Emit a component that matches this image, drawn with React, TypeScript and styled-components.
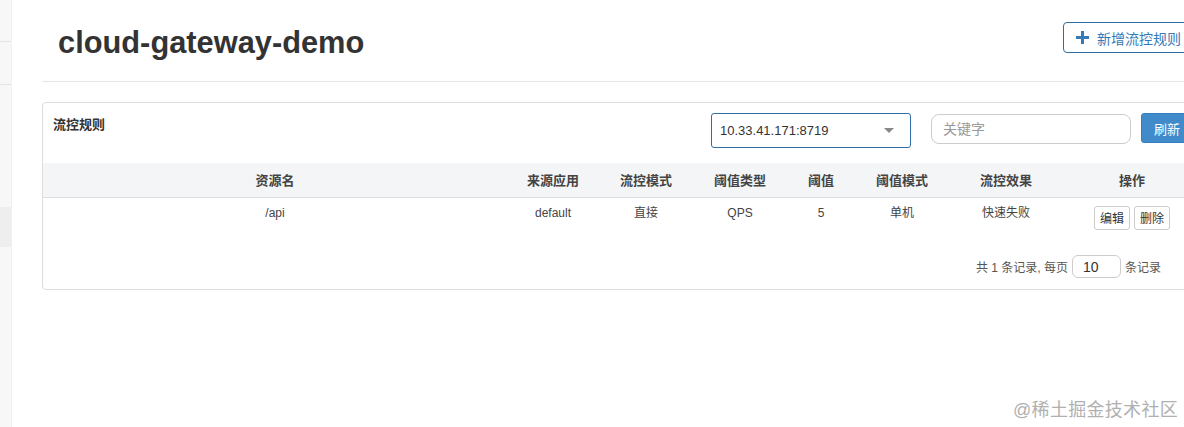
import React from 'react';
import styled, { createGlobalStyle } from 'styled-components';

const GlobalStyle = createGlobalStyle`
  html, body { margin: 0; padding: 0; background: #fff; }
  body {
    font-family: "Liberation Sans", "Noto Sans CJK SC", sans-serif;
    color: #333;
    overflow: hidden;
  }
  * { box-sizing: border-box; }
`;

const Shell = styled.div`
  position: relative;
  display: flex;
  width: 1184px;
  height: 427px;
  overflow: hidden;
`;

const Sidebar = styled.nav`
  flex: 0 0 12px;
  display: flex;
  flex-direction: column;
  background: #f7f7f7;
  border-right: 1px solid #f0f0f0;
`;

const NavItem = styled.div<{ $h: number; $active?: boolean; $line?: boolean }>`
  height: ${({ $h }) => $h}px;
  flex: 0 0 auto;
  background: ${({ $active }) => ($active ? '#eeeeee' : 'transparent')};
  border-bottom: ${({ $line }) => ($line ? '1px solid #e4e4e4' : 'none')};
`;

const Main = styled.main`
  flex: 0 0 auto;
  width: 1200px;
  padding: 0 0 0 30px;
`;

const Content = styled.div`
  width: 1160px;
`;

const Header = styled.header`
  display: flex;
  justify-content: space-between;
  align-items: flex-start;
  height: 82px;
  border-bottom: 1px solid #e5e5e5;
`;

const Title = styled.h1`
  margin: 26px 0 0 16px;
  font-size: 30.8px;
  line-height: 34px;
  font-weight: bold;
  color: #333;
`;

const OutlineButton = styled.button`
  margin: 22px 8px 0 0;
  height: 31px;
  padding: 0 12px;
  display: flex;
  align-items: center;
  gap: 8px;
  border: 1px solid #2e6da4;
  border-radius: 4px;
  background: #fff;
  color: #337ab7;
  font-family: inherit;
  font-size: 14px;
`;

const Panel = styled.section`
  margin-top: 20px;
  border: 1px solid #dddddd;
  border-radius: 4px;
  overflow: hidden;
`;

const Toolbar = styled.div`
  display: flex;
  align-items: flex-start;
  padding: 10px 8px 15px 10px;
`;

const PanelTitle = styled.div`
  flex: 1;
  padding-top: 1px;
  font-size: 13px;
  font-weight: bold;
  color: #333;
`;

const SelectBox = styled.div`
  width: 200px;
  height: 35px;
  display: flex;
  align-items: center;
  justify-content: space-between;
  padding: 0 16px 0 8px;
  border: 1px solid #2f6fa8;
  border-radius: 3px;
  font-size: 13px;
  color: #333;
`;

const SearchInput = styled.input`
  margin-left: 20px;
  margin-top: 1px;
  width: 200px;
  height: 30px;
  padding: 0 11px;
  border: 1px solid #cccccc;
  border-radius: 8px;
  font-family: inherit;
  font-size: 14px;
  color: #333;
  outline: none;
  &::placeholder { color: #999; }
`;

const PrimaryButton = styled.button`
  margin-left: 10px;
  height: 30px;
  padding: 0 12px;
  border: 1px solid #357ebd;
  border-radius: 3px;
  background: #428bca;
  color: #fff;
  font-family: inherit;
  font-size: 13px;
`;

const Table = styled.table`
  width: 100%;
  border-collapse: collapse;
  table-layout: fixed;
`;

const Th = styled.th<{ $w: number }>`
  width: ${({ $w }) => $w}px;
  height: 34px;
  background: #f4f5f6;
  border-bottom: 1px solid #dddddd;
  font-size: 13px;
  font-weight: bold;
  color: #444;
  text-align: center;
  padding: 0;
`;

const Td = styled.td`
  height: 40px;
  vertical-align: top;
  padding: 6px 0 0;
  line-height: 18px;
  font-size: 12px;
  color: #444;
  text-align: center;
`;

const ActionCell = styled(Td)`
  padding-top: 8px;
`;

const SmallButton = styled.button`
  height: 24px;
  padding: 0 5px;
  margin: 0 2px;
  border: 1px solid #cccccc;
  border-radius: 3px;
  background: #fff;
  color: #333;
  font-family: inherit;
  font-size: 12px;
`;

const Pager = styled.div`
  display: flex;
  justify-content: flex-end;
  align-items: center;
  gap: 4px;
  padding: 18px 40px 11px 0;
  font-size: 12px;
  color: #555;
`;

const PageSize = styled.input`
  width: 49px;
  height: 23px;
  padding: 0 10px;
  border: 1px solid #cccccc;
  border-radius: 6px;
  font-family: inherit;
  font-size: 14px;
  color: #333;
  outline: none;
`;

const Watermark = styled.div`
  position: absolute;
  right: 6px;
  bottom: 6px;
  font-size: 18px;
  color: #b0b0b0;
  letter-spacing: 0.3px;
`;

const columns = [
  { label: '资源名', w: 464 },
  { label: '来源应用', w: 92 },
  { label: '流控模式', w: 94 },
  { label: '阈值类型', w: 94 },
  { label: '阈值', w: 68 },
  { label: '阈值模式', w: 94 },
  { label: '流控效果', w: 114 },
  { label: '操作', w: 138 },
];

const rules = [
  { resource: '/api', app: 'default', mode: '直接', grade: 'QPS', count: '5', cluster: '单机', effect: '快速失败' },
];

export default function App() {
  return (
    <Shell>
      <GlobalStyle />
      <Sidebar>
        <NavItem $h={42} $line />
        <NavItem $h={43} $line />
        <NavItem $h={122} />
        <NavItem $h={40} $active />
      </Sidebar>
      <Main>
        <Content>
          <Header>
            <Title>cloud-gateway-demo</Title>
            <OutlineButton type="button">
              <svg width="13" height="13" viewBox="0 0 13 13">
                <path d="M5 0h3v5h5v3H8v5H5V8H0V5h5z" fill="#337ab7" />
              </svg>
              新增流控规则
            </OutlineButton>
          </Header>
          <Panel>
            <Toolbar>
              <PanelTitle>流控规则</PanelTitle>
              <SelectBox>
                <span>10.33.41.171:8719</span>
                <svg width="10" height="6" viewBox="0 0 10 6">
                  <path d="M0 0h10L5 5z" fill="#888" />
                </svg>
              </SelectBox>
              <SearchInput placeholder="关键字" />
              <PrimaryButton type="button">刷新</PrimaryButton>
            </Toolbar>
            <Table>
              <thead>
                <tr>
                  {columns.map((c) => (
                    <Th key={c.label} $w={c.w}>{c.label}</Th>
                  ))}
                </tr>
              </thead>
              <tbody>
                {rules.map((r) => (
                  <tr key={r.resource}>
                    <Td>{r.resource}</Td>
                    <Td>{r.app}</Td>
                    <Td>{r.mode}</Td>
                    <Td>{r.grade}</Td>
                    <Td>{r.count}</Td>
                    <Td>{r.cluster}</Td>
                    <Td>{r.effect}</Td>
                    <ActionCell>
                      <SmallButton type="button">编辑</SmallButton>
                      <SmallButton type="button">删除</SmallButton>
                    </ActionCell>
                  </tr>
                ))}
              </tbody>
            </Table>
            <Pager>
              <span>共 1 条记录, 每页</span>
              <PageSize defaultValue="10" />
              <span>条记录</span>
            </Pager>
          </Panel>
        </Content>
      </Main>
      <Watermark>@稀土掘金技术社区</Watermark>
    </Shell>
  );
}
